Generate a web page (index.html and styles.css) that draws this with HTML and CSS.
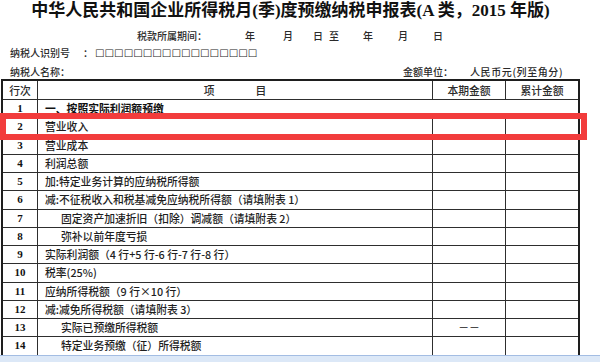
FILE: index.html
```html
<!DOCTYPE html>
<html lang="zh-CN">
<head>
<meta charset="utf-8">
<title>企业所得税月(季)度预缴纳税申报表</title>
<link rel="stylesheet" href="styles.css">
</head>
<body>
<div class="page">
  <div class="title">中华人民共和国企业所得税月(季)度预缴纳税申报表(A 类，2015 年版)</div>
  <div class="period">
    <span class="lbl">税款所属期间：</span>
    <span class="g38">年</span><span class="g28">月</span><span class="g20">日</span><span class="g6">至</span><span class="g24">年</span><span class="g25">月</span><span class="g25">日</span>
  </div>
  <div class="taxid">
    <span class="lbl6">纳税人识别号</span><span class="colon">：</span><span class="boxes">□□□□□□□□□□□□□□□□□</span>
  </div>
  <div class="namerow">
    <span class="lbl6">纳税人名称：</span><span class="unit">金额单位：</span><span class="currency">人民币元(列至角分)</span>
  </div>
  <div class="grid">
    <div class="c hdr">行次</div><div class="c hdr item"><span>项</span><span>目</span></div><div class="c hdr">本期金额</div><div class="c hdr">累计金额</div>

    <div class="c num">1</div><div class="c txt bold span3">一、按照实际利润额预缴</div>

    <div class="c num">2</div><div class="c txt">营业收入</div><div class="c"></div><div class="c"></div>
    <div class="c num">3</div><div class="c txt">营业成本</div><div class="c"></div><div class="c"></div>
    <div class="c num">4</div><div class="c txt">利润总额</div><div class="c"></div><div class="c"></div>
    <div class="c num">5</div><div class="c txt">加:特定业务计算的应纳税所得额</div><div class="c"></div><div class="c"></div>
    <div class="c num">6</div><div class="c txt">减:不征税收入和税基减免应纳税所得额（请填附表 1）</div><div class="c"></div><div class="c"></div>
    <div class="c num">7</div><div class="c txt ind">固定资产加速折旧（扣除）调减额（请填附表 2）</div><div class="c"></div><div class="c"></div>
    <div class="c num">8</div><div class="c txt ind">弥补以前年度亏损</div><div class="c"></div><div class="c"></div>
    <div class="c num">9</div><div class="c txt">实际利润额（4 行+5 行-6 行-7 行-8 行）</div><div class="c"></div><div class="c"></div>
    <div class="c num">10</div><div class="c txt">税率(25%)</div><div class="c"></div><div class="c"></div>
    <div class="c num">11</div><div class="c txt">应纳所得税额（9 行×10 行）</div><div class="c"></div><div class="c"></div>
    <div class="c num">12</div><div class="c txt">减:减免所得税额（请填附表 3）</div><div class="c"></div><div class="c"></div>
    <div class="c num">13</div><div class="c txt ind">实际已预缴所得税额</div><div class="c dash">－－</div><div class="c"></div>
    <div class="c num">14</div><div class="c txt ind">特定业务预缴（征）所得税额</div><div class="c"></div><div class="c"></div>
  </div>
  <div class="redbox"></div>
  <div class="statusbar"></div>
</div>
</body>
</html>
```

FILE: styles.css
```css
html, body {
  margin: 0;
  padding: 0;
  background: #fff;
}

body {
  font-family: "Noto Sans CJK SC", "Noto Sans", sans-serif;
  color: #222;
}

.page {
  position: relative;
  width: 600px;
  height: 362px;
  overflow: hidden;
}

.title {
  width: 579px;
  margin-left: 1px;
  height: 22px;
  line-height: 22px;
  text-align: center;
  font-family: "Liberation Serif", "Noto Sans CJK SC", serif;
  font-weight: bold;
  font-size: 17px;
  color: #111;
  white-space: nowrap;
}

.period {
  margin-top: 6px;
  height: 16px;
  line-height: 16px;
  font-size: 10px;
  font-weight: 500;
  display: flex;
  padding-left: 137px;
  color: #2a2a2a;
  white-space: nowrap;
}

.lbl { width: 70px; }
.g38 { margin-left: 38px; }
.g28 { margin-left: 28px; }
.g20 { margin-left: 20px; }
.g6 { margin-left: 6px; }
.g24 { margin-left: 24px; }
.g25 { margin-left: 25px; }

.taxid {
  height: 17px;
  line-height: 17px;
  font-size: 10px;
  font-weight: 500;
  display: flex;
  padding-left: 10px;
  color: #2a2a2a;
  white-space: nowrap;
}

.lbl6 { width: 60px; }

.colon {
  margin-left: 13px;
  width: 10px;
}

.boxes {
  margin-left: 2px;
  font-family: "DejaVu Sans", sans-serif;
  font-size: 10px;
  font-weight: normal;
  letter-spacing: 0.1px;
  color: #1a1a1a;
}

.namerow {
  margin-top: 3px;
  height: 15px;
  line-height: 15px;
  font-size: 10px;
  font-weight: 500;
  display: flex;
  padding-left: 10px;
  color: #2a2a2a;
  white-space: nowrap;
}

.unit {
  margin-left: 333px;
  width: 50px;
}

.currency {
  margin-left: 17px;
  letter-spacing: 0.6px;
}

.grid {
  display: grid;
  margin-left: 1px;
  width: 579px;
  box-sizing: border-box;
  border: 2px solid #1e1e1e;
  border-bottom: 1px solid #333;
  background: #2e2e2e;
  gap: 1px;
  grid-template-columns: 34px 394px 72px 72px;
  grid-template-rows: 18px repeat(14, 17.25px);
}

.c {
  background: #fff;
  font-size: 10.8px;
  font-weight: 500;
  line-height: 17px;
  display: flex;
  align-items: center;
  white-space: nowrap;
  overflow: hidden;
  color: #1e1e1e;
}

.hdr {
  justify-content: center;
  color: #2a2a2a;
}

.item { gap: 41px; }

.num {
  justify-content: center;
  font-family: "Liberation Serif", serif;
  font-weight: bold;
  font-size: 11px;
  color: #111;
}

.txt { padding-left: 7px; }
.ind { padding-left: 23px; }
.bold { font-weight: bold; color: #111; }
.span3 { grid-column: 2 / 5; }

.dash {
  justify-content: center;
  color: #444;
}

.redbox {
  position: absolute;
  left: 0;
  top: 113px;
  width: 587px;
  height: 27px;
  box-sizing: border-box;
  border: 6px solid #f23c3c;
}

.statusbar {
  position: absolute;
  left: 0;
  bottom: 0;
  width: 600px;
  height: 6px;
  background: #dce8f7;
  border-top: 1px solid #a3bde3;
}
```
